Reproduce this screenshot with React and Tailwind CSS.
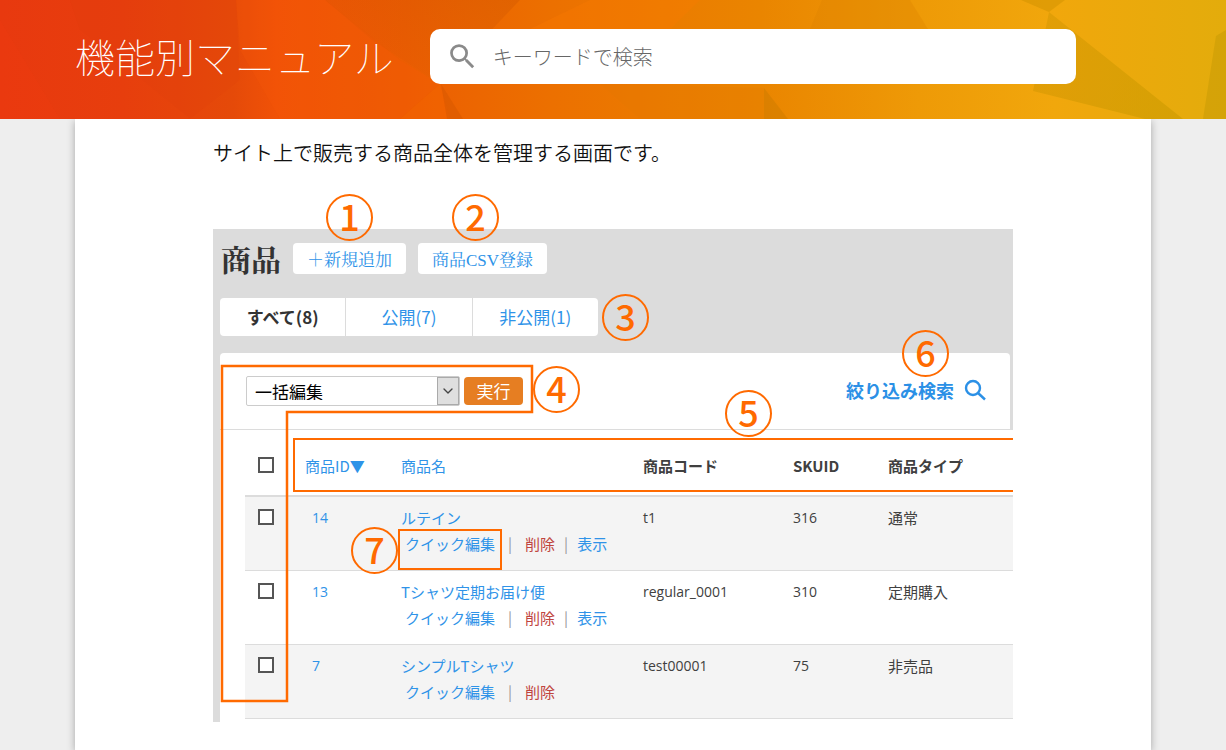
import { MdSearch } from 'react-icons/md';
import { FiChevronDown } from 'react-icons/fi';

const products = [
  { id: 14, name: 'ルテイン', code: 't1', sku: 316, type: '通常', visible: true },
  { id: 13, name: 'Tシャツ定期お届け便', code: 'regular_0001', sku: 310, type: '定期購入', visible: true },
  { id: 7, name: 'シンプルTシャツ', code: 'test00001', sku: 75, type: '非売品', visible: false },
];

function HeaderArt() {
  return (
    <svg className="absolute inset-0 h-full w-full" viewBox="0 0 1226 119" preserveAspectRatio="none" aria-hidden="true">
      <defs>
        <linearGradient id="heat" x1="0" x2="1" y1="0" y2="0">
          <stop offset="0" stopColor="#e8390f" />
          <stop offset="0.1" stopColor="#e73e0d" />
          <stop offset="0.19" stopColor="#e54a09" />
          <stop offset="0.225" stopColor="#f05207" />
          <stop offset="0.33" stopColor="#ec5d02" />
          <stop offset="0.45" stopColor="#ec7000" />
          <stop offset="0.62" stopColor="#ea8500" />
          <stop offset="0.75" stopColor="#ee9a07" />
          <stop offset="0.86" stopColor="#f1a70c" />
          <stop offset="1" stopColor="#e3ac0c" />
        </linearGradient>
        <linearGradient id="shade" x1="0" x2="1" y1="1" y2="0">
          <stop offset="0" stopColor="#c85000" stopOpacity="0" />
          <stop offset="1" stopColor="#c85000" stopOpacity="0.3" />
        </linearGradient>
        <linearGradient id="fold" x1="0" x2="1" y1="0" y2="0.3">
          <stop offset="0" stopColor="#cc9200" stopOpacity="0.4" />
          <stop offset="1" stopColor="#cc9a00" stopOpacity="0.6" />
        </linearGradient>
      </defs>
      <rect width="1226" height="119" fill="url(#heat)" />
      <polygon points="0,20 60,119 0,119" fill="#f03c10" opacity="0.25" />
      <polygon points="70,0 236,0 240,80 190,119 80,30" fill="#dc3c0c" opacity="0.15" />
      <polygon points="236,0 325,0 400,60 440,84 400,119 280,119 240,50" fill="#f85606" opacity="0.25" />
      <polygon points="325,0 520,0 440,84 372,40" fill="url(#shade)" />
      <polygon points="400,119 440,84 450,119" fill="#fa6400" opacity="0.35" />
      <polygon points="441,84 463,119 447,119" fill="#c85000" opacity="0.3" />
      <polygon points="530,29 590,0 700,0 670,29" fill="#fb7c00" opacity="0.3" />
      <polygon points="600,84 764,88 764,119 640,119" fill="#df7a00" opacity="0.2" />
      <polygon points="764,88 788,119 764,119" fill="#c67700" opacity="0.4" />
      <polygon points="822,0 910,0 928,29 810,29" fill="#dc8000" opacity="0.3" />
      <polygon points="1021,0 1065,0 1049,12" fill="#cf9200" opacity="0.5" />
      <polygon points="1049,12 1183,119 1145,119 1033,91" fill="url(#fold)" />
      <polygon points="1216,36 1226,30 1226,119 1203,119" fill="#c69a04" opacity="0.5" />
    </svg>
  );
}

function Badge({ n, className }) {
  return (
    <span
      className={`absolute flex h-[47px] w-[47px] items-center justify-center rounded-full border-2 border-[#ff6a00] pb-1.5 text-4xl leading-none font-medium text-[#ff6a00] ${className}`}
    >
      {n}
    </span>
  );
}

function Check({ label }) {
  return (
    <input
      type="checkbox"
      aria-label={label}
      className="ml-[13px] block h-4 w-4 appearance-none border-2 border-[#555] bg-white checked:bg-[#555]"
    />
  );
}

function ProductRow({ product }) {
  return (
    <tr className="h-[74px] border-b border-[#dcdcdc] align-top odd:bg-[#f4f4f4]">
      <td className="pt-3">
        <Check label={product.name} />
      </td>
      <td className="pt-2 pl-[7px] font-['Open_Sans','Noto_Sans_CJK_JP',sans-serif] text-sm leading-[26px]">
        <a href="#edit" className="text-[#2f93e8]">{product.id}</a>
      </td>
      <td className="pt-2 whitespace-nowrap">
        <a href="#edit" className="text-[#2f93e8]">{product.name}</a>
        <div className="pl-1">
          <a href="#quick" className="text-[#2f93e8]">クイック編集</a>
          <span className="mx-[13px] text-[#999]">|</span>
          <a href="#delete" className="text-[#c0453f]">削除</a>
          {product.visible && (
            <>
              <span className="mx-[9px] text-[#999]">|</span>
              <a href="#view" className="text-[#2f93e8]">表示</a>
            </>
          )}
        </div>
      </td>
      <td className="pt-2 font-['Open_Sans','Noto_Sans_CJK_JP',sans-serif] text-sm leading-[26px]">{product.code}</td>
      <td className="pt-2 font-['Open_Sans','Noto_Sans_CJK_JP',sans-serif] text-sm leading-[26px]">{product.sku}</td>
      <td className="pt-2">{product.type}</td>
    </tr>
  );
}

function ProductTable() {
  return (
    <table className="w-full table-fixed border-collapse text-left text-[15px] leading-[26px] text-[#404040]">
      <colgroup>
        <col className="w-[60px]" />
        <col className="w-[96px]" />
        <col className="w-[242px]" />
        <col className="w-[150px]" />
        <col className="w-[95px]" />
        <col />
      </colgroup>
      <thead>
        <tr className="h-[66px] border-b-2 border-[#dcdcdc]">
          <th className="pt-1">
            <Check label="すべて選択" />
          </th>
          <th className="pt-1.5 font-normal">
            <a href="#sort-id" className="text-[#2f93e8]">商品ID▼</a>
          </th>
          <th className="pt-1.5 font-normal">
            <a href="#sort-name" className="text-[#2f93e8]">商品名</a>
          </th>
          <th className="pt-1.5 font-bold">商品コード</th>
          <th className="pt-1.5 font-bold">SKUID</th>
          <th className="pt-1.5 font-bold">商品タイプ</th>
        </tr>
      </thead>
      <tbody>
        {products.map((product) => (
          <ProductRow key={product.id} product={product} />
        ))}
      </tbody>
    </table>
  );
}

function Annotations() {
  return (
    <>
      <svg className="absolute top-[172px] left-[7px] h-[340px] w-[320px]" viewBox="0 0 320 340" aria-hidden="true">
        <path d="M2 2H312V48H67V337H2Z" fill="none" stroke="#ff6a00" strokeWidth="2.5" />
      </svg>
      <div className="absolute top-[246px] right-0 left-20 h-[54px] border-2 border-r-0 border-[#ff6a00]" />
      <div className="absolute top-[337px] left-[185px] h-[41px] w-[104px] border-2 border-[#ff6a00]" />
      <Badge n={1} className="top-[2px] left-[113px]" />
      <Badge n={2} className="top-[2px] left-[239px]" />
      <Badge n={3} className="top-[102px] left-[389px]" />
      <Badge n={4} className="top-[174px] left-[320px]" />
      <Badge n={5} className="top-[198px] left-[512px]" />
      <Badge n={6} className="top-[138px] left-[689px]" />
      <Badge n={7} className="top-[335px] left-[138px]" />
    </>
  );
}

export default function App() {
  return (
    <div className="flex min-h-screen flex-col bg-[#eee] font-['Noto_Sans_CJK_JP',sans-serif]">
      <header className="relative z-10">
        <HeaderArt />
        <div className="relative mx-auto flex max-w-[1226px] items-center gap-9 px-[75px] pt-[29px] pb-[35px]">
          <h1 className="text-[40px] leading-[55px] font-thin whitespace-nowrap text-white">機能別マニュアル</h1>
          <label className="mr-[75px] flex h-[55px] flex-1 items-center gap-3.5 rounded-[10px] bg-white px-4">
            <MdSearch className="h-[33px] w-[33px] shrink-0 text-[#8a8a8a]" />
            <input
              type="search"
              aria-label="検索"
              placeholder="キーワードで検索"
              className="min-w-0 flex-1 text-xl font-light text-[#333] outline-none placeholder:text-[#666]"
            />
          </label>
        </div>
      </header>

      <main className="mx-auto w-full max-w-[1076px] flex-1 bg-white px-[138px] pt-[19px] shadow-[0_2px_8px_rgba(0,0,0,0.3)]">
        <p className="text-xl leading-[30px] font-[350] text-[#111]">サイト上で販売する商品全体を管理する画面です。</p>

        <figure className="relative mt-6 pt-[37px]">
          <section className="bg-[#dcdcdc] pt-3.5 pl-[7px]">
            <div className="flex h-[31px] items-center gap-3 pl-px font-['Liberation_Serif','Noto_Serif_CJK_JP','Noto_Sans_CJK_JP',serif]">
              <h2 className="pt-1 text-3xl leading-none font-bold text-[#333]">商品</h2>
              <button className="h-[31px] w-[113px] rounded bg-white pt-1 text-[17px] text-[#2f93e8]">＋新規追加</button>
              <button className="h-[31px] w-[129px] rounded bg-white pt-1 text-[17px] text-[#2f93e8]">商品CSV登録</button>
            </div>

            <nav className="mt-6 flex h-[38px] w-[378px] divide-x divide-[#dcdcdc] overflow-hidden rounded bg-white text-[17px]">
              <a href="#all" className="flex flex-1 items-center justify-center font-bold text-[#333]">すべて(8)</a>
              <a href="#public" className="flex flex-1 items-center justify-center text-[#2f93e8]">公開(7)</a>
              <a href="#private" className="flex flex-1 items-center justify-center text-[#2f93e8]">非公開(1)</a>
            </nav>

            <div className="mt-[17px] mr-[3px] flex h-[77px] items-center rounded-t border-b border-[#dcdcdc] bg-white pr-6 pl-[26px]">
              <div className="relative">
                <select
                  aria-label="一括操作"
                  className="h-[30px] w-[214px] appearance-none rounded-xs border border-[#ccc] bg-white pl-2 text-[17px] leading-none text-black"
                >
                  <option>一括編集</option>
                </select>
                <span className="pointer-events-none absolute top-px right-px flex h-7 w-[22px] items-center justify-center border border-[#aaa] bg-[#dfdfdf]">
                  <FiChevronDown className="h-4 w-4 text-[#444]" />
                </span>
              </div>
              <button className="ml-1 h-7 w-[59px] rounded bg-[#e67e22] pb-0.5 text-[17px] leading-none text-white">実行</button>
              <a href="#filter" className="ml-auto flex items-center gap-2.5 pb-0.5 text-lg leading-none font-bold text-[#2b90e6]">
                絞り込み検索
                <svg className="h-[22px] w-[22px]" viewBox="0 0 22 22" fill="none" stroke="currentColor" strokeWidth="2.4" aria-hidden="true">
                  <circle cx="9" cy="9" r="7" />
                  <path d="M14 14l7 6.5" />
                </svg>
              </a>
            </div>

            <div className="bg-white pb-[3px] pl-[25px]">
              <ProductTable />
            </div>
          </section>
          <Annotations />
        </figure>
      </main>
    </div>
  );
}
